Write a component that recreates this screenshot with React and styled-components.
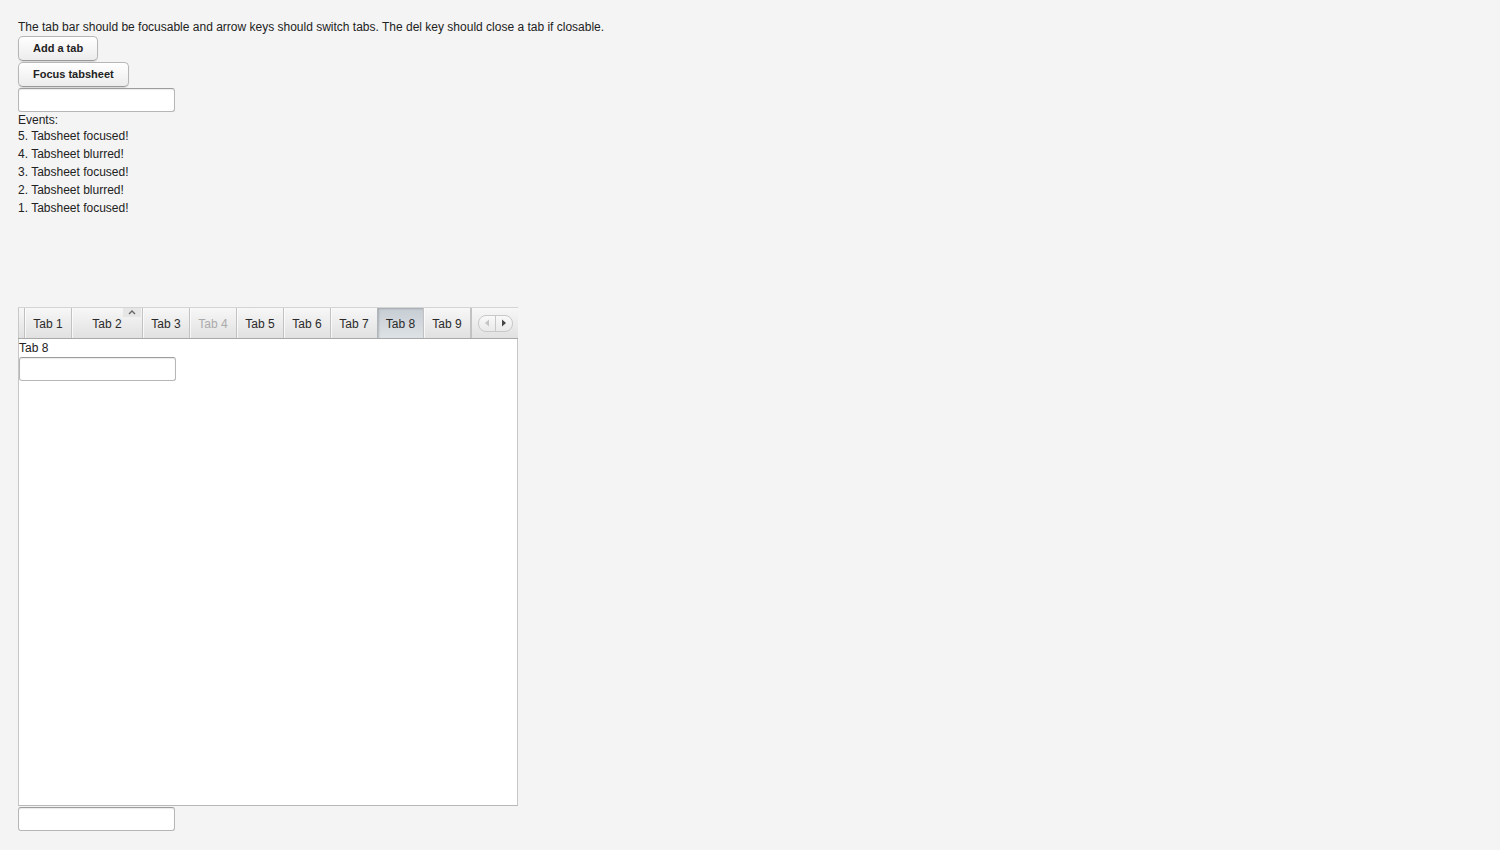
import React, { useState } from "react";
import styled, { createGlobalStyle } from "styled-components";

const GlobalStyle = createGlobalStyle`
  html, body {
    margin: 0;
    padding: 0;
    background: #f4f4f4;
  }
  body {
    font-family: "Liberation Sans", Arial, sans-serif;
    font-size: 12px;
    color: #222;
  }
`;

const Page = styled.div`
  padding: 18px 18px 0;
  display: flex;
  flex-direction: column;
  align-items: flex-start;
`;

const Label = styled.div`
  font-size: 12px;
  line-height: ${(p) => p.$lh || 18}px;
  height: ${(p) => p.$h || 18}px;
  color: #222;
`;

const Button = styled.button`
  font-family: "Liberation Sans", Arial, sans-serif;
  font-size: 11px;
  font-weight: bold;
  color: #222;
  height: 25px;
  padding: 0 14px 1px;
  margin-bottom: 1px;
  border: 1px solid #b6b6b6;
  border-bottom-color: #999;
  border-radius: 5px;
  background: linear-gradient(#ffffff, #ececec);
  box-shadow: 0 1px 1px rgba(0, 0, 0, 0.12), inset 0 1px 0 #fff;
  cursor: pointer;
`;

const TextField = styled.input`
  box-sizing: border-box;
  width: 157px;
  height: 24px;
  margin: ${(p) => p.$m || "0"};
  border: 1px solid #b6b6b6;
  border-top-color: #9d9d9d;
  border-radius: 3px;
  background: #fff;
  box-shadow: inset 0 1px 1px rgba(0, 0, 0, 0.08);
  outline: none;
`;

const EventList = styled.div`
  display: flex;
  flex-direction: column;
`;

const Sheet = styled.div`
  width: 500px;
  margin-top: 90px;
  display: flex;
  flex-direction: column;
`;

const TabBar = styled.div`
  display: flex;
  height: 32px;
  box-sizing: border-box;
  border-top: 1px solid #d4d4d4;
  border-bottom: 1px solid #a9a9a9;
  background: linear-gradient(#f7f7f7, #e1e1e1);
`;

const Spacer = styled.div`
  width: 5px;
  border-left: 1px solid #c8c8c8;
  border-right: 1px solid #c0c0c0;
`;

const Tab = styled.div`
  position: relative;
  width: ${(p) => p.$w}px;
  box-sizing: border-box;
  display: flex;
  align-items: center;
  justify-content: center;
  padding-top: 2px;
  font-size: 12px;
  color: ${(p) => (p.$disabled ? "#aaa" : "#2a2a2a")};
  border-right: 1px solid #c2c2c2;
  box-shadow: inset 1px 0 0 rgba(255, 255, 255, 0.7);
  background: ${(p) =>
    p.$selected ? "linear-gradient(#c6cdd3, #dde2e6)" : "transparent"};
  ${(p) =>
    p.$selected &&
    "box-shadow: inset 1px 1px 2px rgba(0,0,0,0.18); border-left: 1px solid #b0b6bb; margin-left: -1px;"}
`;

const CloseCaret = styled.span`
  position: absolute;
  top: 0;
  right: 1px;
  width: 18px;
  height: 9px;
  background: #e6e6e6;
  display: flex;
  align-items: center;
  justify-content: center;
`;

const Scroller = styled.div`
  flex: 1;
  display: flex;
  align-items: center;
  justify-content: center;
  border-left: 1px solid #c2c2c2;
`;

const ScrollPill = styled.div`
  display: flex;
  height: 15px;
  border: 1px solid #c8c8c8;
  border-radius: 8px;
  background: linear-gradient(#f9f9f9, #e9e9e9);
  overflow: hidden;
`;

const ScrollBtn = styled.div`
  width: 16px;
  display: flex;
  align-items: center;
  justify-content: center;
  & + & {
    border-left: 1px solid #c8c8c8;
  }
`;

const Content = styled.div`
  height: 466px;
  background: #fff;
  border: 1px solid #c6c6c6;
  border-top: none;
  border-bottom-color: #b8b8b8;
  display: flex;
  flex-direction: column;
  align-items: flex-start;
`;

const ContentLabel = styled.div`
  font-size: 12px;
  line-height: 18px;
`;

const Arrow = ({ dir, color }) => (
  <svg width="6" height="8" viewBox="0 0 6 8">
    {dir === "left" ? (
      <path d="M5 0.5 L1 4 L5 7.5 Z" fill={color} />
    ) : (
      <path d="M1 0.5 L5 4 L1 7.5 Z" fill={color} />
    )}
  </svg>
);

const Caret = () => (
  <svg width="8" height="5" viewBox="0 0 8 5">
    <path d="M1 4 L4 1 L7 4" fill="none" stroke="#666" strokeWidth="1.4" />
  </svg>
);

const tabs = [
  { name: "Tab 1", w: 47 },
  { name: "Tab 2", w: 71, caret: true },
  { name: "Tab 3", w: 47 },
  { name: "Tab 4", w: 47, disabled: true },
  { name: "Tab 5", w: 47 },
  { name: "Tab 6", w: 47 },
  { name: "Tab 7", w: 47 },
  { name: "Tab 8", w: 47 },
  { name: "Tab 9", w: 47 },
];

const events = [
  "5. Tabsheet focused!",
  "4. Tabsheet blurred!",
  "3. Tabsheet focused!",
  "2. Tabsheet blurred!",
  "1. Tabsheet focused!",
];

export default function App() {
  const [selected, setSelected] = useState("Tab 8");
  return (
    <>
      <GlobalStyle />
      <Page>
        <Label>
          The tab bar should be focusable and arrow keys should switch tabs. The
          del key should close a tab if closable.
        </Label>
        <Button>Add a tab</Button>
        <Button>Focus tabsheet</Button>
        <TextField />
        <EventList>
          <Label $h={15} $lh={17}>Events:</Label>
          {events.map((e) => (
            <Label key={e}>{e}</Label>
          ))}
        </EventList>
        <Sheet>
          <TabBar>
            <Spacer />
            {tabs.map((t) => (
              <Tab
                key={t.name}
                $w={t.w}
                $disabled={t.disabled}
                $selected={selected === t.name}
                onClick={() => !t.disabled && setSelected(t.name)}
              >
                {t.name}
                {t.caret && (
                  <CloseCaret>
                    <Caret />
                  </CloseCaret>
                )}
              </Tab>
            ))}
            <Scroller>
              <ScrollPill>
                <ScrollBtn>
                  <Arrow dir="left" color="#c4c4c4" />
                </ScrollBtn>
                <ScrollBtn>
                  <Arrow dir="right" color="#444" />
                </ScrollBtn>
              </ScrollPill>
            </Scroller>
          </TabBar>
          <Content>
            <ContentLabel>{selected}</ContentLabel>
            <TextField />
          </Content>
        </Sheet>
        <TextField $m="1px 0 0" />
      </Page>
    </>
  );
}
